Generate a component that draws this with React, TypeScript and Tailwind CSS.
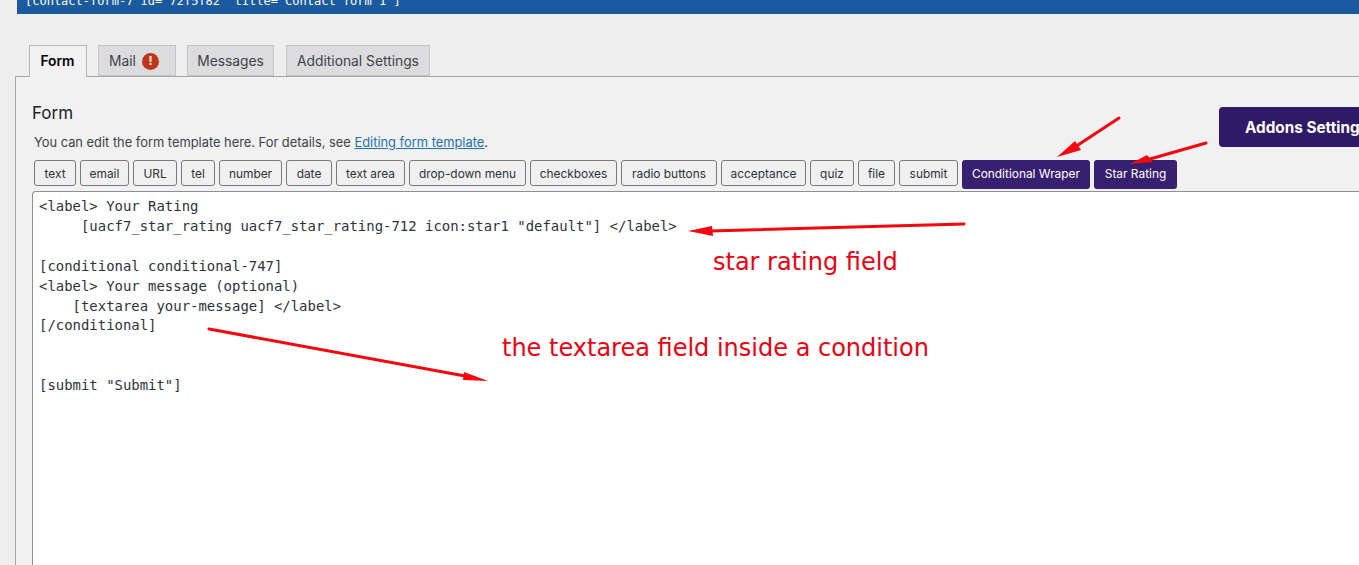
import React from 'react';

const tags = [
  { label: 'text', w: 'w-[42px]' },
  { label: 'email', w: 'w-[49px]' },
  { label: 'URL', w: 'w-[44px]' },
  { label: 'tel', w: 'w-[34px]' },
  { label: 'number', w: 'w-[63px]' },
  { label: 'date', w: 'w-[46px]' },
  { label: 'text area', w: 'w-[69px]' },
  { label: 'drop-down menu', w: 'w-[117px]' },
  { label: 'checkboxes', w: 'w-[87px]' },
  { label: 'radio buttons', w: 'w-[96px]' },
  { label: 'acceptance', w: 'w-[85px]' },
  { label: 'quiz', w: 'w-[44px]' },
  { label: 'file', w: 'w-[37px]' },
  { label: 'submit', w: 'w-[59px]' },
];

const code = `<label> Your Rating
     [uacf7_star_rating uacf7_star_rating-712 icon:star1 "default"] </label>

[conditional conditional-747]
<label> Your message (optional)
    [textarea your-message] </label>
[/conditional]


[submit "Submit"]`;

function Arrow({ d, head }: { d: string; head: string }) {
  return (
    <>
      <path d={d} stroke="#f5070f" strokeWidth="3" strokeLinecap="round" fill="none" />
      <polygon points={head} fill="#f5070f" />
    </>
  );
}

export default function App() {
  return (
    <div className="relative h-[565px] w-[1359px] overflow-hidden bg-[#eeeeee] font-['Inter',sans-serif] text-[#1d2327]">
      <div className="ml-[17px] h-[14px] overflow-hidden bg-[#1b5a9e]">
        <div className="-mt-[6px] pl-[8px] font-['DejaVu_Sans_Mono',monospace] text-[12px] leading-[14px] text-white">
          [contact-form-7 id="72f5f82" title="Contact form 1"]
        </div>
      </div>

      <div className="mt-[31px] flex h-[32px] items-stretch pl-[29px] text-[13.8px]">
        <div className="z-10 flex h-[32px] w-[58px] items-center justify-center border border-b-0 border-[#b5b5b5] bg-[#f1f1f1] pr-[1px] font-semibold text-black">Form</div>
        <div className="ml-[11px] flex h-[31px] w-[78px] items-center gap-[6px] border border-[#c3c4c7] bg-[#dcdcde] pt-[1px] pl-[10px] text-[#3c434a]">
          Mail
          <span className="flex h-[17px] w-[17px] items-center justify-center rounded-full bg-[#c0361a] text-[12px] leading-none font-bold text-white">!</span>
        </div>
        <div className="ml-[11px] flex h-[31px] w-[87px] items-center justify-center border border-[#c3c4c7] bg-[#dcdcde] pt-[1px] text-[#3c434a]">Messages</div>
        <div className="ml-[12px] flex h-[31px] w-[144px] items-center justify-center border border-[#c3c4c7] bg-[#dcdcde] pt-[1px] text-[#3c434a]">Additional Settings</div>
      </div>

      <div className="-mt-px ml-[15px] h-[600px] border-t border-l border-[#a7a7a7] bg-[#f1f1f1] pt-[26px] pl-[16px]">
        <h2 className="text-[17px] leading-[20px] text-[#1d2327]">Form</h2>
        <p className="mt-[12px] ml-[2px] text-[12.87px] leading-[16px] text-[#3c434a]">
          You can edit the form template here. For details, see <a className="text-[#2271b1] underline">Editing form template</a>.
        </p>
        <div className="mt-[9px] ml-[2px] flex h-[29px] items-start gap-[4px] text-[11.9px]">
          {tags.map((tag) => (
            <span key={tag.label} className={`flex h-[26px] items-center justify-center rounded-[3px] border border-[#76797d] bg-[#f0f0f1] pt-[1px] whitespace-nowrap text-[#2c3338] ${tag.w}`}>
              {tag.label}
            </span>
          ))}
          <span className="flex h-[29px] w-[128px] items-center justify-center rounded-[3px] bg-[#37206f] pb-[1px] whitespace-nowrap text-white">Conditional Wraper</span>
          <span className="flex h-[29px] w-[83px] items-center justify-center rounded-[3px] bg-[#37206f] pb-[1px] whitespace-nowrap text-white">Star Rating</span>
        </div>
        <div className="mt-[2px] h-[400px] rounded-tl-[4px] border-t border-l border-[#8c8f94] bg-white pt-[5px] pl-[6px]">
          <pre className="font-['DejaVu_Sans_Mono',monospace] text-[13.95px] leading-[19.9px] text-[#2c3338]">{code}</pre>
        </div>
      </div>

      <div className="absolute top-[107px] left-[1219px] flex h-[40px] w-[170px] items-center rounded-[4px] bg-[#2e1a66] pt-[2px] pl-[26px] text-[15.3px] font-bold whitespace-nowrap text-white">
        Addons Settings
      </div>

      <svg className="absolute top-0 left-0" width="1359" height="565">
        <Arrow d="M1119 118 L1078 145" head="1057,157 1075,141 1081,150" />
        <Arrow d="M1206 143 L1150 159" head="1130,164 1147,155 1153,162" />
        <Arrow d="M964 224 L710 231" head="688,231 712,226 713,236" />
        <Arrow d="M209 329 L465 376" head="488,381 464,372 463,380" />
      </svg>

      <div className="absolute top-[247px] left-[713px] font-['DejaVu_Sans',sans-serif] text-[24px] leading-[30px] whitespace-nowrap text-[#f00010]">star rating field</div>
      <div className="absolute top-[333px] left-[502px] font-['DejaVu_Sans',sans-serif] text-[24px] leading-[30px] whitespace-nowrap text-[#f00010]">the textarea field inside a condition</div>
    </div>
  );
}
